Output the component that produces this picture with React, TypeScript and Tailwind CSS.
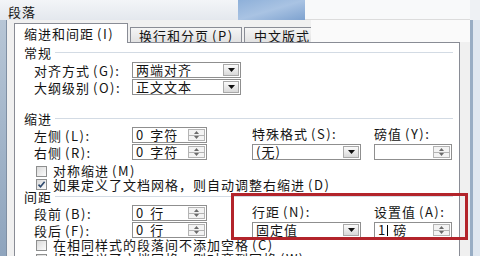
const ui = "font-['Noto_Sans_CJK_SC','Noto_Sans_CJK_JP',sans-serif]";

function DropBtn() {
  return (
    <div className="w-[16px] h-full border border-[#a9a9a9] bg-gradient-to-b from-[#fbfbfb] to-[#d9d9d9] flex items-center justify-center">
      <svg width="7" height="4" viewBox="0 0 7 4">
        <path d="M0 0h7L3.5 4z" fill="#111" />
      </svg>
    </div>
  );
}

function Combo({ value, w }: { value: string; w: string }) {
  return (
    <div className={`${w} h-[16px] border border-[#8f8f8f] bg-white flex p-[1px]`}>
      <span className="flex-1 pl-[2px] leading-[12px] whitespace-nowrap">{value}</span>
      <DropBtn />
    </div>
  );
}

function Spin({ children, w }: { children?: React.ReactNode; w: string }) {
  return (
    <div className={`${w} h-[16px] border border-[#8f8f8f] bg-white flex p-[1px]`}>
      <span className="flex-1 pl-[2px] flex items-center leading-[12px] whitespace-nowrap">{children}</span>
      <div className="w-[17px] border border-[#b4b4b4] bg-[#f3f3f3] flex flex-col">
        <div className="flex-1 flex items-center justify-center border-b border-[#b4b4b4]">
          <svg width="5" height="3" viewBox="0 0 5 3">
            <path d="M0 3h5L2.5 0z" fill="#6a6a6a" />
          </svg>
        </div>
        <div className="flex-1 flex items-center justify-center">
          <svg width="5" height="3" viewBox="0 0 5 3">
            <path d="M0 0h5L2.5 3z" fill="#6a6a6a" />
          </svg>
        </div>
      </div>
    </div>
  );
}

// CJK caption followed by the half-width accelerator part, e.g. 对齐方式 (G):
function Txt({ cjk, k, colon }: { cjk: string; k: string; colon?: boolean }) {
  return (
    <>
      {cjk}
      <span className="ml-[3px] tracking-[1.5px]">
        ({k}){colon ? ":" : ""}
      </span>
    </>
  );
}

function Check({ checked, cjk, k, h }: { checked?: boolean; cjk: string; k: string; h: string }) {
  return (
    <div className={`${h} flex items-center pl-[21px] shrink-0`}>
      <div className="w-[11px] h-[11px] shrink-0 border border-[#8e8f8f] bg-gradient-to-br from-[#dadada] to-[#fcfcfc] flex items-center justify-center">
        {checked && (
          <svg width="9" height="9" viewBox="0 0 9 9">
            <path d="M1.5 4.6l2 2.1L7.6 1.8" stroke="#2f4a6e" strokeWidth="1.6" fill="none" />
          </svg>
        )}
      </div>
      <span className="ml-[6px] whitespace-nowrap leading-[12px]">
        <Txt cjk={cjk} k={k} />
      </span>
    </div>
  );
}

function Group({ title, h }: { title: string; h: string }) {
  return (
    <div className={`${h} flex items-center pl-[9px] pr-[6px] shrink-0`}>
      <span className="leading-[11px]">{title}</span>
      <div className="flex-1 h-px bg-[#d3dbe4] ml-[3px]" />
    </div>
  );
}

function Label({ cjk, k, w }: { cjk: string; k: string; w: string }) {
  return (
    <span className={`${w} shrink-0 whitespace-nowrap leading-[13px]`}>
      <Txt cjk={cjk} k={k} colon />
    </span>
  );
}

export default function App() {
  return (
    <div className={`relative w-[480px] h-[256px] overflow-hidden flex flex-col bg-[#f0f0f0] text-[13px] leading-[13px] tracking-[1px] text-[#141414] ${ui}`}>
      {/* title bar */}
      <div className="h-[20px] flex shrink-0">
        <div className="w-[238px] bg-gradient-to-b from-[#f3f5f8] to-[#e4e8ee] flex items-center pl-[8px] pt-[2px]">
          段落
        </div>
        <div className="w-[67px] bg-gradient-to-br from-[#8eb0d9] via-[#a9c3e3] to-[#7ea2cf]" />
        <div className="flex-1 bg-[#f8f9fa] border-b border-[#dcdcdc]" />
        <div className="w-[10px] bg-[#eef1f4]" />
      </div>

      <div className="flex flex-1 min-h-0">
        {/* left frame */}
        <div className="w-[7px] bg-gradient-to-b from-[#b7c6d6] to-[#8ea4bd] border-r border-[#7f8fa3]" />

        {/* dialog body */}
        <div className="flex-1 flex flex-col bg-[#f0f0f0]">
          {/* tabs */}
          <div className="h-[22px] flex items-end pl-[7px] shrink-0">
            <div className="w-[114px] h-[20px] bg-white border border-b-0 border-[#898c95] flex items-center pl-[9px] mb-[-1px] relative z-10 whitespace-nowrap">
              <Txt cjk="缩进和间距" k="I" />
            </div>
            <div className="w-[112px] h-[15px] ml-[2px] bg-gradient-to-b from-[#f5f5f5] to-[#e2e2e2] border border-b-0 border-[#898c95] flex items-center pl-[8px] whitespace-nowrap">
              <Txt cjk="换行和分页" k="P" />
            </div>
            <div className="w-[67px] h-[15px] ml-[2px] bg-gradient-to-b from-[#f5f5f5] to-[#e2e2e2] border border-b-0 border-r-0 border-[#898c95] flex items-center pl-[9px] overflow-hidden whitespace-nowrap">
              中文版式
            </div>
            <div className="flex-1 h-full bg-[#fafafa]" />
          </div>

          {/* panel */}
          <div className="flex-1 flex">
            <div className="w-[446px] ml-[7px] bg-white border border-b-0 border-[#898c95] flex flex-col pt-[2px]">
              <Group title="常规" h="h-[14px]" />
              <div className="h-[3px] shrink-0" />
              <div className="h-[16px] flex items-center pl-[19px] shrink-0">
                <Label cjk="对齐方式" k="G" w="w-[98px]" />
                <Combo value="两端对齐" w="w-[109px]" />
              </div>
              <div className="h-[1px] shrink-0" />
              <div className="h-[16px] flex items-center pl-[19px] shrink-0">
                <Label cjk="大纲级别" k="O" w="w-[98px]" />
                <Combo value="正文文本" w="w-[109px]" />
              </div>

              <div className="h-[16px] shrink-0" />
              <Group title="缩进" h="h-[14px]" />
              <div className="h-[2px] shrink-0" />
              <div className="h-[16px] flex items-center pl-[19px] shrink-0">
                <Label cjk="左侧" k="L" w="w-[98px]" />
                <Spin w="w-[75px]">
                  0<span className="ml-[6px]">字符</span>
                </Spin>
                <Label cjk="特殊格式" k="S" w="w-[122px] ml-[45px] -mt-[3px]" />
                <Label cjk="磅值" k="Y" w="w-[78px] -mt-[3px]" />
              </div>
              <div className="h-[1px] shrink-0" />
              <div className="h-[16px] flex items-center pl-[19px] shrink-0">
                <Label cjk="右侧" k="R" w="w-[98px]" />
                <Spin w="w-[75px]">
                  0<span className="ml-[6px]">字符</span>
                </Spin>
                <div className="ml-[45px]">
                  <Combo value="(无)" w="w-[109px]" />
                </div>
                <div className="ml-[13px]">
                  <Spin w="w-[78px]" />
                </div>
              </div>

              <div className="h-[4px] shrink-0" />
              <Check cjk="对称缩进" k="M" h="h-[14px]" />
              <Check checked cjk="如果定义了文档网格，则自动调整右缩进" k="D" h="h-[13px]" />
              <Group title="间距" h="h-[11px]" />
              <div className="h-[3px] shrink-0" />
              <div className="h-[16px] flex items-center pl-[19px] shrink-0">
                <Label cjk="段前" k="B" w="w-[98px]" />
                <Spin w="w-[75px]">
                  0<span className="ml-[6px]">行</span>
                </Spin>
                <Label cjk="行距" k="N" w="w-[122px] ml-[45px] -mt-[3px]" />
                <Label cjk="设置值" k="A" w="w-[78px] -mt-[3px]" />
              </div>
              <div className="h-[1px] shrink-0" />
              <div className="h-[16px] flex items-center pl-[19px] shrink-0">
                <Label cjk="段后" k="F" w="w-[98px]" />
                <Spin w="w-[75px]">
                  0<span className="ml-[6px]">行</span>
                </Spin>
                <div className="ml-[45px]">
                  <Combo value="固定值" w="w-[109px]" />
                </div>
                <div className="ml-[13px]">
                  <Spin w="w-[78px]">
                    1<span className="w-px h-[11px] bg-black ml-[1px]" />
                    <span className="ml-[5px]">磅</span>
                  </Spin>
                </div>
              </div>
              <Check cjk="在相同样式的段落间不添加空格" k="C" h="h-[14px]" />
              <Check checked cjk="如果定义了文档网格，则对齐到网格" k="W" h="h-[14px]" />
            </div>
            <div className="flex-1" />
          </div>
        </div>

        {/* right frame */}
        <div className="w-[10px] flex">
          <div className="w-[3px] bg-[#98adc4]" />
          <div className="flex-1 bg-[#dfe7f0]" />
        </div>
      </div>

      {/* red annotation box */}
      <div className="absolute left-[231px] top-[193px] w-[237px] h-[47px] border-[3px] border-[#b3242b]" />
    </div>
  );
}
